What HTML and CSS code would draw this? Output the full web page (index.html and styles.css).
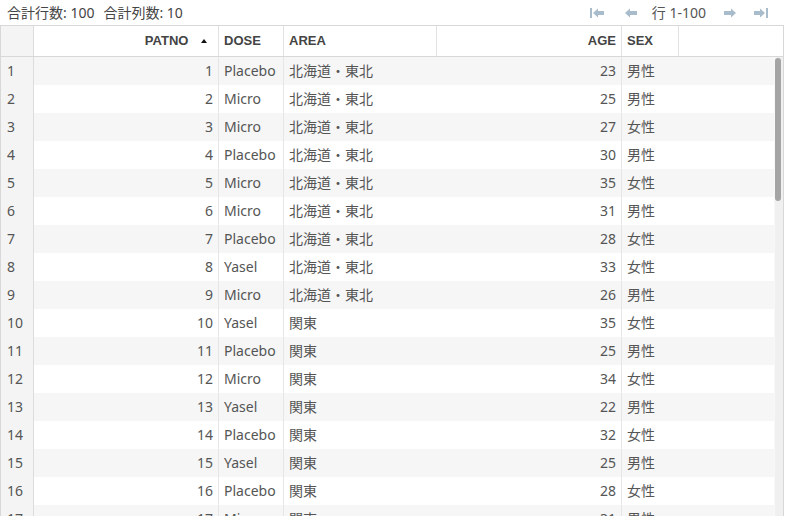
FILE: index.html
```html
<!DOCTYPE html>
<html lang="ja">
<head>
<meta charset="utf-8">
<title>Data</title>
<link rel="stylesheet" href="styles.css">
</head>
<body>
<div class="topbar">
  <div class="totals"><span>合計行数: 100</span><span>合計列数: 10</span></div>
  <div class="pager">
    <svg class="pi" width="14" height="10" viewBox="0 0 14 10"><rect x="0" y="0" width="2" height="10"/><polygon points="3,5 8,0.5 8,3 14,3 14,7 8,7 8,9.5"/></svg>
    <svg class="pi gap" width="12" height="10" viewBox="0 0 12 10"><polygon points="0,5 5,0.5 5,3 12,3 12,7 5,7 5,9.5"/></svg>
    <span class="range">行 1-100</span>
    <svg class="pi" width="12" height="10" viewBox="0 0 12 10"><polygon points="12,5 7,0.5 7,3 0,3 0,7 7,7 7,9.5"/></svg>
    <svg class="pi gap2" width="14" height="10" viewBox="0 0 14 10"><polygon points="11,5 6,0.5 6,3 0,3 0,7 6,7 6,9.5"/><rect x="12" y="0" width="2" height="10"/></svg>
  </div>
</div>
<div class="grid">
  <div class="row head">
    <div class="c num"></div>
    <div class="c r">PATNO <span class="sort"></span></div>
    <div class="c">DOSE</div>
    <div class="c">AREA</div>
    <div class="c r">AGE</div>
    <div class="c">SEX</div>
    <div class="c fill"></div>
  </div>
  <div class="body">
    <div class="rows">
      <div class="row"><div class="c num">1</div><div class="c r">1</div><div class="c">Placebo</div><div class="c">北海道・東北</div><div class="c r">23</div><div class="c">男性</div><div class="c fill"></div></div>
      <div class="row"><div class="c num">2</div><div class="c r">2</div><div class="c">Micro</div><div class="c">北海道・東北</div><div class="c r">25</div><div class="c">男性</div><div class="c fill"></div></div>
      <div class="row"><div class="c num">3</div><div class="c r">3</div><div class="c">Micro</div><div class="c">北海道・東北</div><div class="c r">27</div><div class="c">女性</div><div class="c fill"></div></div>
      <div class="row"><div class="c num">4</div><div class="c r">4</div><div class="c">Placebo</div><div class="c">北海道・東北</div><div class="c r">30</div><div class="c">男性</div><div class="c fill"></div></div>
      <div class="row"><div class="c num">5</div><div class="c r">5</div><div class="c">Micro</div><div class="c">北海道・東北</div><div class="c r">35</div><div class="c">女性</div><div class="c fill"></div></div>
      <div class="row"><div class="c num">6</div><div class="c r">6</div><div class="c">Micro</div><div class="c">北海道・東北</div><div class="c r">31</div><div class="c">男性</div><div class="c fill"></div></div>
      <div class="row"><div class="c num">7</div><div class="c r">7</div><div class="c">Placebo</div><div class="c">北海道・東北</div><div class="c r">28</div><div class="c">女性</div><div class="c fill"></div></div>
      <div class="row"><div class="c num">8</div><div class="c r">8</div><div class="c">Yasel</div><div class="c">北海道・東北</div><div class="c r">33</div><div class="c">女性</div><div class="c fill"></div></div>
      <div class="row"><div class="c num">9</div><div class="c r">9</div><div class="c">Micro</div><div class="c">北海道・東北</div><div class="c r">26</div><div class="c">男性</div><div class="c fill"></div></div>
      <div class="row"><div class="c num">10</div><div class="c r">10</div><div class="c">Yasel</div><div class="c">関東</div><div class="c r">35</div><div class="c">女性</div><div class="c fill"></div></div>
      <div class="row"><div class="c num">11</div><div class="c r">11</div><div class="c">Placebo</div><div class="c">関東</div><div class="c r">25</div><div class="c">男性</div><div class="c fill"></div></div>
      <div class="row"><div class="c num">12</div><div class="c r">12</div><div class="c">Micro</div><div class="c">関東</div><div class="c r">34</div><div class="c">女性</div><div class="c fill"></div></div>
      <div class="row"><div class="c num">13</div><div class="c r">13</div><div class="c">Yasel</div><div class="c">関東</div><div class="c r">22</div><div class="c">男性</div><div class="c fill"></div></div>
      <div class="row"><div class="c num">14</div><div class="c r">14</div><div class="c">Placebo</div><div class="c">関東</div><div class="c r">32</div><div class="c">女性</div><div class="c fill"></div></div>
      <div class="row"><div class="c num">15</div><div class="c r">15</div><div class="c">Yasel</div><div class="c">関東</div><div class="c r">25</div><div class="c">男性</div><div class="c fill"></div></div>
      <div class="row"><div class="c num">16</div><div class="c r">16</div><div class="c">Placebo</div><div class="c">関東</div><div class="c r">28</div><div class="c">女性</div><div class="c fill"></div></div>
      <div class="row"><div class="c num">17</div><div class="c r">17</div><div class="c">Micro</div><div class="c">関東</div><div class="c r">31</div><div class="c">男性</div><div class="c fill"></div></div>
    </div>
    <div class="scroll"><div class="thumb"></div></div>
  </div>
</div>
</body>
</html>
```
FILE: styles.css
```css
html, body {
  margin: 0;
  padding: 0;
  background: #fff;
  overflow: hidden;
}
body {
  width: 790px;
  height: 516px;
  font-family: "Noto Sans", "Open Sans", "Noto Sans CJK JP", sans-serif;
  font-size: 14px;
  color: #555;
}
.topbar {
  height: 25px;
  display: flex;
  align-items: center;
  justify-content: space-between;
  width: 784px;
}
.totals {
  padding-left: 7px;
  color: #444;
  font-size: 14px;
  display: flex;
  gap: 9px;
  font-family: "Noto Sans", "Noto Sans CJK JP", sans-serif;
  line-height: 24px;
}
.pager {
  display: flex;
  align-items: center;
  padding-right: 16px;
}
.pi {
  fill: #a9bccb;
  display: block;
}
.pi.gap { margin-left: 21px; }
.range {
  margin: 0 18px 0 15px;
  color: #555;
  font-family: "Noto Sans", "Noto Sans CJK JP", sans-serif;
  font-size: 14px;
  line-height: 24px;
}
.pi.gap2 { margin-left: 18px; }
.grid {
  width: 782px;
  height: 491px;
  border: 1px solid #d8d8d8;
  border-bottom: none;
  overflow: hidden;
  box-sizing: content-box;
}
.row {
  display: grid;
  grid-template-columns: 33px 185px 65px 153px 185px 57px 1fr;
  height: 28px;
}
.c {
  box-sizing: border-box;
  padding: 0 5px;
  line-height: 28px;
  white-space: nowrap;
  overflow: hidden;
  font-family: "Noto Sans", "Noto Sans CJK JP", sans-serif;
}
.r { text-align: right; }
.head {
  height: 31px;
  border-bottom: 1px solid #d8d8d8;
  box-sizing: border-box;
}
.head .c {
  line-height: 30px;
  font-family: "Liberation Sans", Arial, sans-serif;
  font-weight: bold;
  font-size: 13px;
  color: #444;
  border-right: 1px solid #e2e2e2;
}
.head .c.fill { border-right: none; }
.head .c.num { background: #f4f4f4; border-right: 1px solid #dcdcdc; }
.head .c.r { padding-right: 5px; }
.sort {
  display: inline-block;
  width: 0;
  height: 0;
  border-left: 3.5px solid transparent;
  border-right: 3.5px solid transparent;
  border-bottom: 4px solid #111;
  margin: 0 6px 2px 9px;
  vertical-align: middle;
}
.body {
  display: flex;
}
.rows {
  flex: 1;
}
.rows .row:nth-child(odd) { background: #f6f6f6; }
.rows .c.num {
  background: #f4f4f4;
  border-right: 1px solid #dcdcdc;
  padding-left: 6px;
}
.rows .c:nth-child(2),
.rows .c:nth-child(3),
.rows .c:nth-child(5) {
  border-right: 1px solid #e6e6e6;
}
.scroll {
  width: 8px;
  background: #f0f0f0;
  border-left: 1px solid #f8f8f8;
  padding-top: 1px;
}
.thumb {
  width: 6px;
  height: 143px;
  background: #a5a5a5;
  border-radius: 3px;
}
```
